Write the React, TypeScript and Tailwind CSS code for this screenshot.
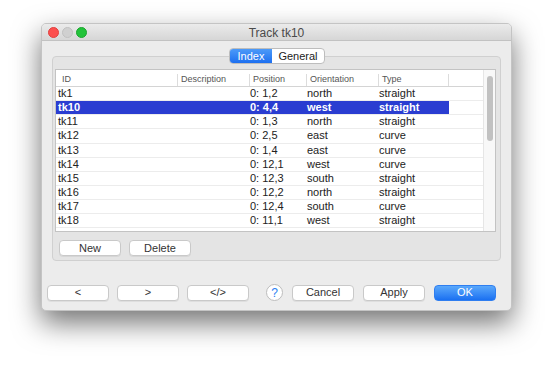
import React from 'react';

type Track = { id: string; pos: string; orient: string; type: string };

const tracks: Track[] = [
  { id: 'tk1', pos: '0: 1,2', orient: 'north', type: 'straight' },
  { id: 'tk10', pos: '0: 4,4', orient: 'west', type: 'straight' },
  { id: 'tk11', pos: '0: 1,3', orient: 'north', type: 'straight' },
  { id: 'tk12', pos: '0: 2,5', orient: 'east', type: 'curve' },
  { id: 'tk13', pos: '0: 1,4', orient: 'east', type: 'curve' },
  { id: 'tk14', pos: '0: 12,1', orient: 'west', type: 'curve' },
  { id: 'tk15', pos: '0: 12,3', orient: 'south', type: 'straight' },
  { id: 'tk16', pos: '0: 12,2', orient: 'north', type: 'straight' },
  { id: 'tk17', pos: '0: 12,4', orient: 'south', type: 'curve' },
  { id: 'tk18', pos: '0: 11,1', orient: 'west', type: 'straight' },
];

const columns = [
  { name: 'ID', w: 'w-[122px]' },
  { name: 'Description', w: 'w-[72px]' },
  { name: 'Position', w: 'w-[57px]' },
  { name: 'Orientation', w: 'w-[72px]' },
  { name: 'Type', w: 'w-[70px]' },
];

function Button({ label, primary }: { label: string; primary?: boolean }) {
  return (
    <button
      className={`w-[62px] h-[16px] rounded-[4px] text-[11px] leading-none flex items-center justify-center ${
        primary
          ? 'bg-gradient-to-b from-[#5aa8fb] to-[#1a70f1] text-white border border-[#2f7ef0]'
          : 'bg-white text-[#333] border border-[#c9c9c9] shadow-[0_1px_0_rgba(0,0,0,0.06)]'
      }`}
    >
      {label}
    </button>
  );
}

export default function App() {
  return (
    <div
      className="w-[554px] h-[372px] bg-white pt-[23px] pl-[41px] overflow-hidden"
      style={{ fontFamily: '"Liberation Sans", Arial, sans-serif' }}
    >
      <div className="w-[471px] h-[288px] rounded-[5px] bg-[#ececec] border border-[#c4c4c4] shadow-[0_12px_28px_rgba(0,0,0,0.55)] flex flex-col overflow-hidden">
        {/* Title bar */}
        <div className="h-[17px] relative flex items-center justify-center bg-gradient-to-b from-[#ebebeb] to-[#d6d6d6] border-b border-[#c2c2c2]">
          <div className="absolute left-[6px] top-[3px] flex gap-[3px]">
            <span className="w-[11px] h-[11px] rounded-full bg-[#fc4f4e] border border-[#e0403f]" />
            <span className="w-[11px] h-[11px] rounded-full bg-[#d0d0d0] border border-[#c0c0c0]" />
            <span className="w-[11px] h-[11px] rounded-full bg-[#22c33a] border border-[#1aa52d]" />
          </div>
          <span className="text-[12px] text-[#4a4a4a] pt-[2px]">Track tk10</span>
        </div>

        {/* Tabs */}
        <div className="flex justify-center mt-[7px] -mb-[8px] relative z-10 pl-[1px]">
          <div className="flex h-[16px] rounded-[4px] border border-[#bdbdbd] overflow-hidden text-[11px] leading-none bg-white">
            <div className="w-[42px] flex items-center justify-center text-white bg-gradient-to-b from-[#4c9af8] to-[#1d6ff0]">
              Index
            </div>
            <div className="w-[52px] flex items-center justify-center text-[#222]">General</div>
          </div>
        </div>

        {/* Group box */}
        <div className="mx-[10px] h-[205px] rounded-[4px] border border-[#d0d0d0] bg-[#e4e4e4] pt-[12px] pl-[2px] pr-[4px] flex flex-col">
          <div className="h-[163px] bg-white border border-[#c3c3c3] flex overflow-hidden">
            <div className="flex-1 flex flex-col overflow-hidden">
              {/* Header */}
              <div className="h-[17px] flex shrink-0 border-b border-[#d4d4d4] text-[9px] text-[#555]">
                {columns.map((c, i) => (
                  <div
                    key={c.name}
                    className={`${c.w} flex items-end pb-[0px] ${i === 0 ? 'pl-[6px]' : 'pl-[3px]'} border-r border-[#dcdcdc] mt-[4px]`}
                  >
                    {c.name}
                  </div>
                ))}
                <div className="flex-1" />
              </div>
              {/* Rows */}
              {tracks.map((t) => {
                const sel = t.id === 'tk10';
                return (
                  <div
                    key={t.id}
                    className="h-[14.15px] shrink-0 flex border-b border-[#ececec] text-[11px] leading-none"
                  >
                    <div className={`flex ${sel ? 'bg-[#2a3dd1] text-white font-bold' : 'text-[#222]'}`}>
                      <div className="w-[122px] pl-[2px] flex items-center">{t.id}</div>
                      <div className="w-[72px]" />
                      <div className="w-[57px] flex items-center">{t.pos}</div>
                      <div className="w-[72px] flex items-center">{t.orient}</div>
                      <div className="w-[70px] flex items-center">{t.type}</div>
                    </div>
                    <div className="flex-1" />
                  </div>
                );
              })}
            </div>
            {/* Scrollbar */}
            <div className="w-[12px] bg-[#f8f8f8] border-l border-[#e6e6e6] pt-[6px] flex justify-center">
              <div className="w-[6px] h-[65px] rounded-full bg-[#c1c1c1]" />
            </div>
          </div>
          <div className="flex gap-[8px] mt-[8px] pl-[4px]">
            <Button label="New" />
            <Button label="Delete" />
          </div>
        </div>

        {/* Bottom buttons */}
        <div className="flex items-center mt-[23px] pl-[5px]">
          <div className="flex gap-[8px]">
            <Button label="<" />
            <Button label=">" />
            <Button label="</>" />
          </div>
          <div className="ml-[17px] w-[17px] h-[17px] rounded-full bg-white border border-[#bdbdbd] flex items-center justify-center text-[12px] text-[#2a7ff3] leading-none">
            ?
          </div>
          <div className="flex gap-[9px] ml-[9px]">
            <Button label="Cancel" />
            <Button label="Apply" />
            <Button label="OK" primary />
          </div>
        </div>
      </div>
    </div>
  );
}
